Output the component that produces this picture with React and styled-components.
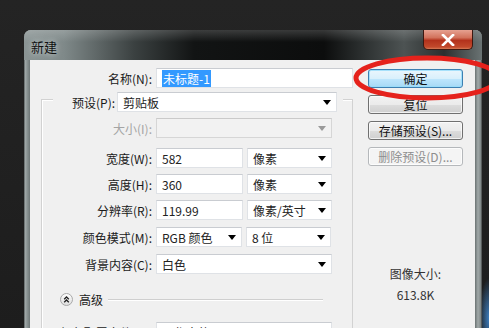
import React from 'react';
import styled, { createGlobalStyle } from 'styled-components';

const GlobalStyle = createGlobalStyle`
  html, body {
    margin: 0;
    padding: 0;
  }
  body {
    background: #1f1f1f;
    font-family: "Noto Sans CJK SC", "Microsoft YaHei", sans-serif;
  }
`;

const Page = styled.div`
  position: relative;
  width: 489px;
  height: 328px;
  overflow: hidden;
  box-sizing: border-box;
  padding: 30px 0 0 24px;
  background:
    radial-gradient(ellipse 10px 40px at 489px 318px, rgba(70, 150, 230, 0.8), rgba(20, 40, 70, 0) 100%),
    linear-gradient(180deg, #242424 0, #1d1d1d 100%);
`;

const Window = styled.div`
  width: 458px;
  height: 360px;
  border-radius: 7px 7px 0 0;
  display: flex;
  flex-direction: column;
  background: linear-gradient(90deg,
    #3a4040 0, #a3abab 1px, #8c9595 3px, #6e7777 6px,
    #222 50%,
    #6a7272 451px, #a1a9a9 454px, #7d8585 457px, #333 458px);
  box-shadow: inset 0 1px 0 rgba(255, 255, 255, 0.35);
`;

const TitleBar = styled.div`
  flex: 0 0 30px;
  height: 30px;
  display: flex;
  align-items: flex-start;
  border-radius: 7px 7px 0 0;
  background:
    linear-gradient(180deg, rgba(255,255,255,0.18) 0, rgba(255,255,255,0) 40%),
    linear-gradient(90deg, #8b9595 0, #7f8989 40px, #3b4141 110px, #121414 170px, #0c0d0d 300px, #2d3131 340px, #4d5353 380px, #2b2f2f 420px, #6a7373 458px);
`;

const Title = styled.span`
  margin: 9px 0 0 7px;
  font-size: 13px;
  line-height: 16px;
  color: #111;
  text-shadow: 0 0 6px rgba(230, 240, 240, 0.9);
`;

const CloseButton = styled.div`
  margin: 0 9px 0 auto;
  width: 50px;
  height: 20px;
  box-sizing: border-box;
  border: 1px solid #3d1810;
  border-top: none;
  border-radius: 0 0 5px 5px;
  background: linear-gradient(180deg, #e6a191 0, #d2725c 40%, #b3321c 55%, #c24a2c 90%, #d77b56 100%);
  display: flex;
  align-items: center;
  justify-content: center;
`;

const Client = styled.div`
  flex: 1 0 auto;
  margin: 0 7px 0 6px;
  background: #f0f0f0;
  display: flex;
  align-items: flex-start;
  padding-top: 8px;
`;

const FormColumn = styled.div`
  width: 323px;
  display: flex;
  flex-direction: column;
`;

const Row = styled.div`
  display: grid;
  grid-template-columns: ${p => p.label}px auto;
  column-gap: 4px;
  align-items: center;
  margin-top: ${p => p.top || 0}px;
`;

const Label = styled.span`
  text-align: right;
  font-size: 12px;
  white-space: nowrap;
  color: ${p => (p.disabled ? '#a4a4a4' : '#1a1a1a')};
`;

const Fields = styled.div`
  display: flex;
  gap: 4px;
`;

const Box = styled.div`
  width: ${p => p.w}px;
  height: 20px;
  box-sizing: border-box;
  border: 1px solid ${p => (p.disabled ? '#d6d6d6' : '#dfe2e6')};
  border-top-color: ${p => (p.disabled ? '#cacaca' : '#c9ccd1')};
  background: ${p => (p.disabled ? '#f2f2f2' : '#fff')};
  display: flex;
  align-items: center;
  padding: 0 5px 0 5px;
  font-size: 12px;
  color: #222;
  white-space: nowrap;
`;

const Selected = styled.span`
  background: #3399ff;
  color: #fff;
  padding: 0 1px;
`;

const Arrow = styled.span`
  margin-left: auto;
  width: 0;
  height: 0;
  border-left: 4px solid transparent;
  border-right: 4px solid transparent;
  border-top: 5px solid ${p => (p.disabled ? '#9a9a9a' : '#000')};
`;

const GroupBox = styled.div`
  margin: 11px 0 0 11px;
  width: 312px;
  height: 260px;
  box-sizing: border-box;
  border: 1px solid #d2d2d2;
  border-bottom: none;
  box-shadow: inset 1px 1px 0 #fff;
  display: flex;
  flex-direction: column;
`;

const PresetRow = styled.div`
  align-self: flex-start;
  margin: -8px 0 0 11px;
  padding: 0 6px 0 19px;
  background: #f0f0f0;
  display: flex;
  align-items: center;
  gap: 2px;
`;

const AdvancedRow = styled.div`
  margin-top: 17px;
  padding: 0 29px 0 18px;
  height: 16px;
  display: flex;
  align-items: center;
  font-size: 12px;
  color: #1a1a1a;
`;

const AdvancedText = styled.span`
  margin: 0 5px 0 6px;
`;

const Rule = styled.div`
  flex: 1;
  height: 1px;
  background: #cfcfcf;
  box-shadow: 0 1px 0 #fff;
`;

const ButtonColumn = styled.div`
  width: 95px;
  margin: 1px 0 0 15px;
  display: flex;
  flex-direction: column;
  align-items: center;
  gap: 7px;
`;

const Button = styled.div`
  width: 95px;
  height: 19px;
  box-sizing: border-box;
  border-radius: 3px;
  border: 1px solid ${p => (p.primary ? '#3c7fb1' : p.disabled ? '#b5b8bb' : '#707070')};
  background: ${p =>
    p.disabled
      ? '#f4f4f4'
      : p.primary
      ? 'linear-gradient(180deg, #eaf6fd 0, #d9f0fc 50%, #bee6fd 51%, #a7d9f5 100%)'
      : 'linear-gradient(180deg, #f2f2f2 0, #ebebeb 50%, #dddddd 51%, #cfcfcf 100%)'};
  box-shadow: inset 0 0 0 1px ${p => (p.primary ? 'rgba(150,220,250,0.8)' : 'rgba(255,255,255,0.7)')};
  display: flex;
  align-items: center;
  justify-content: center;
  font-size: 12px;
  color: ${p => (p.disabled ? '#8d8d8d' : '#111')};
`;

const ImageSize = styled.div`
  margin-top: 93px;
  font-size: 12px;
  line-height: 16px;
  color: #333;
  text-align: center;
  display: flex;
  flex-direction: column;
  gap: 5px;
`;

const Annotation = styled.svg`
  position: absolute;
  left: 0;
  top: 0;
  pointer-events: none;
`;

function Select({ w, children, disabled }) {
  return (
    <Box w={w} disabled={disabled}>
      {children}
      <Arrow disabled={disabled} />
    </Box>
  );
}

function AdvancedIcon() {
  return (
    <svg width="13" height="13" viewBox="0 0 13 13">
      <defs>
        <linearGradient id="advg" x1="0" y1="0" x2="0" y2="1">
          <stop offset="0" stopColor="#ffffff" />
          <stop offset="1" stopColor="#dcdcdc" />
        </linearGradient>
      </defs>
      <circle cx="6.5" cy="6.5" r="6" fill="url(#advg)" stroke="#a8a8a8" />
      <path d="M4.2 6.3 L6.5 4 L8.8 6.3 M4.2 9.3 L6.5 7 L8.8 9.3" fill="none" stroke="#222" strokeWidth="1.3" />
    </svg>
  );
}

export default function App() {
  return (
    <Page>
      <GlobalStyle />
      <Window>
        <TitleBar>
          <Title>新建</Title>
          <CloseButton>
            <svg width="14" height="12" viewBox="0 0 14 12">
              <path d="M2 1 L12 11 M12 1 L2 11" stroke="#fff" strokeWidth="2.6" strokeLinecap="square" />
            </svg>
          </CloseButton>
        </TitleBar>
        <Client>
          <FormColumn>
            <Row label={122}>
              <Label>名称(N):</Label>
              <Box w={197}>
                <Selected>未标题-1</Selected>
              </Box>
            </Row>
            <GroupBox>
              <PresetRow>
                <Label style={{ width: 43 }}>预设(P):</Label>
                <Select w={220}>剪贴板</Select>
              </PresetRow>
              <Row label={110} top={6}>
                <Label disabled>大小(I):</Label>
                <Select w={176} disabled />
              </Row>
              <Row label={110} top={10}>
                <Label>宽度(W):</Label>
                <Fields>
                  <Box w={87}>582</Box>
                  <Select w={85}>像素</Select>
                </Fields>
              </Row>
              <Row label={110} top={6}>
                <Label>高度(H):</Label>
                <Fields>
                  <Box w={87}>360</Box>
                  <Select w={85}>像素</Select>
                </Fields>
              </Row>
              <Row label={110} top={6}>
                <Label>分辨率(R):</Label>
                <Fields>
                  <Box w={87}>119.99</Box>
                  <Select w={85}>像素/英寸</Select>
                </Fields>
              </Row>
              <Row label={110} top={7}>
                <Label>颜色模式(M):</Label>
                <Fields>
                  <Select w={86}>RGB 颜色</Select>
                  <Select w={85}>8 位</Select>
                </Fields>
              </Row>
              <Row label={110} top={7}>
                <Label>背景内容(C):</Label>
                <Select w={176}>白色</Select>
              </Row>
              <AdvancedRow>
                <AdvancedIcon />
                <AdvancedText>高级</AdvancedText>
                <Rule />
              </AdvancedRow>
              <Row label={110} top={15}>
                <Label>颜色配置文件(O):</Label>
                <Select w={176}>工作中的 RGB: sRGB</Select>
              </Row>
            </GroupBox>
          </FormColumn>
          <ButtonColumn>
            <Button primary>确定</Button>
            <Button>复位</Button>
            <Button>存储预设(S)...</Button>
            <Button disabled>删除预设(D)...</Button>
            <ImageSize>
              <span>图像大小:</span>
              <span>613.8K</span>
            </ImageSize>
          </ButtonColumn>
        </Client>
      </Window>
      <Annotation width="489" height="328" viewBox="0 0 489 328">
        <ellipse cx="427" cy="78" rx="71" ry="20" fill="none" stroke="#e5221c" strokeWidth="5" />
      </Annotation>
    </Page>
  );
}
